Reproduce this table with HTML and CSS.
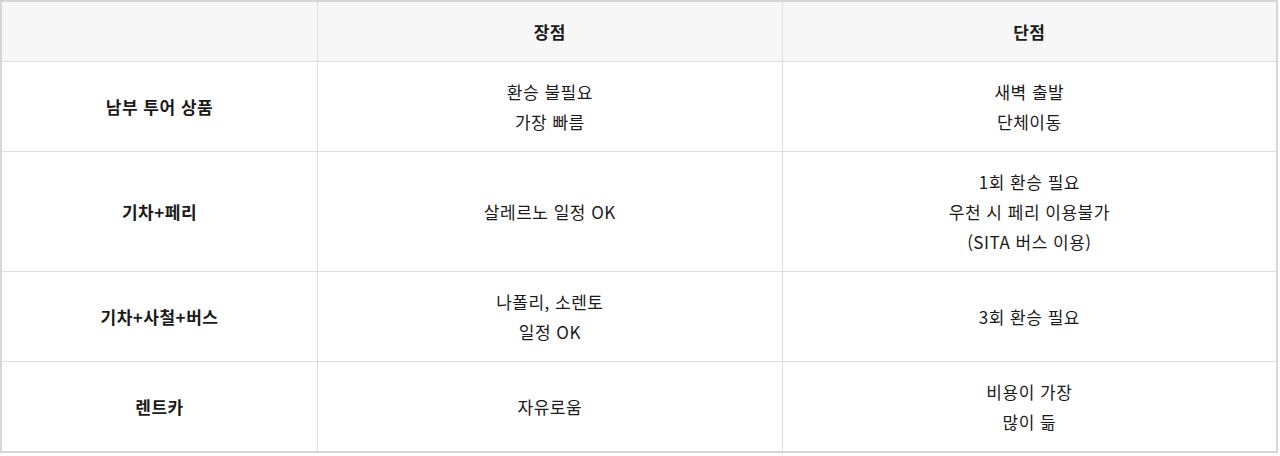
FILE: index.html
```html
<!DOCTYPE html>
<html lang="ko">
<head>
<meta charset="utf-8">
<link rel="stylesheet" href="styles.css">
</head>
<body>
<table class="cmp">
  <colgroup>
    <col class="c1">
    <col class="c2">
    <col class="c3">
  </colgroup>
  <thead>
    <tr class="head">
      <th></th>
      <th>장점</th>
      <th>단점</th>
    </tr>
  </thead>
  <tbody>
    <tr>
      <th>남부 투어 상품</th>
      <td>환승 불필요<br>가장 빠름</td>
      <td>새벽 출발<br>단체이동</td>
    </tr>
    <tr>
      <th>기차+페리</th>
      <td>살레르노 일정 OK</td>
      <td>1회 환승 필요<br>우천 시 페리 이용불가<br>(SITA 버스 이용)</td>
    </tr>
    <tr>
      <th>기차+사철+버스</th>
      <td>나폴리, 소렌토<br>일정 OK</td>
      <td>3회 환승 필요</td>
    </tr>
    <tr>
      <th>렌트카</th>
      <td>자유로움</td>
      <td>비용이 가장<br>많이 듦</td>
    </tr>
  </tbody>
</table>
</body>
</html>
```

FILE: styles.css
```css
html, body {
  margin: 0;
  padding: 0;
  background: #ffffff;
}
body {
  font-family: "Noto Sans CJK KR", "Noto Sans", sans-serif;
  color: #1a1a1a;
  font-size: 17px;
}
.cmp {
  width: 1278px;
  border-collapse: collapse;
  table-layout: fixed;
  border: 2px solid #d6d6d6;
}
.c1 { width: 316px; }
.c2 { width: 464px; }
.c3 { width: 494px; }
.cmp th,
.cmp td {
  border: 1px solid #dedede;
  text-align: center;
  vertical-align: middle;
  padding: 15px 10px 14px;
  line-height: 30px;
  font-size: 17px;
  letter-spacing: 0.5px;
}
.cmp th {
  font-weight: 700;
}
.cmp td {
  font-weight: 400;
}
.head th {
  background: #f7f7f7;
  height: 30px;
}
```
